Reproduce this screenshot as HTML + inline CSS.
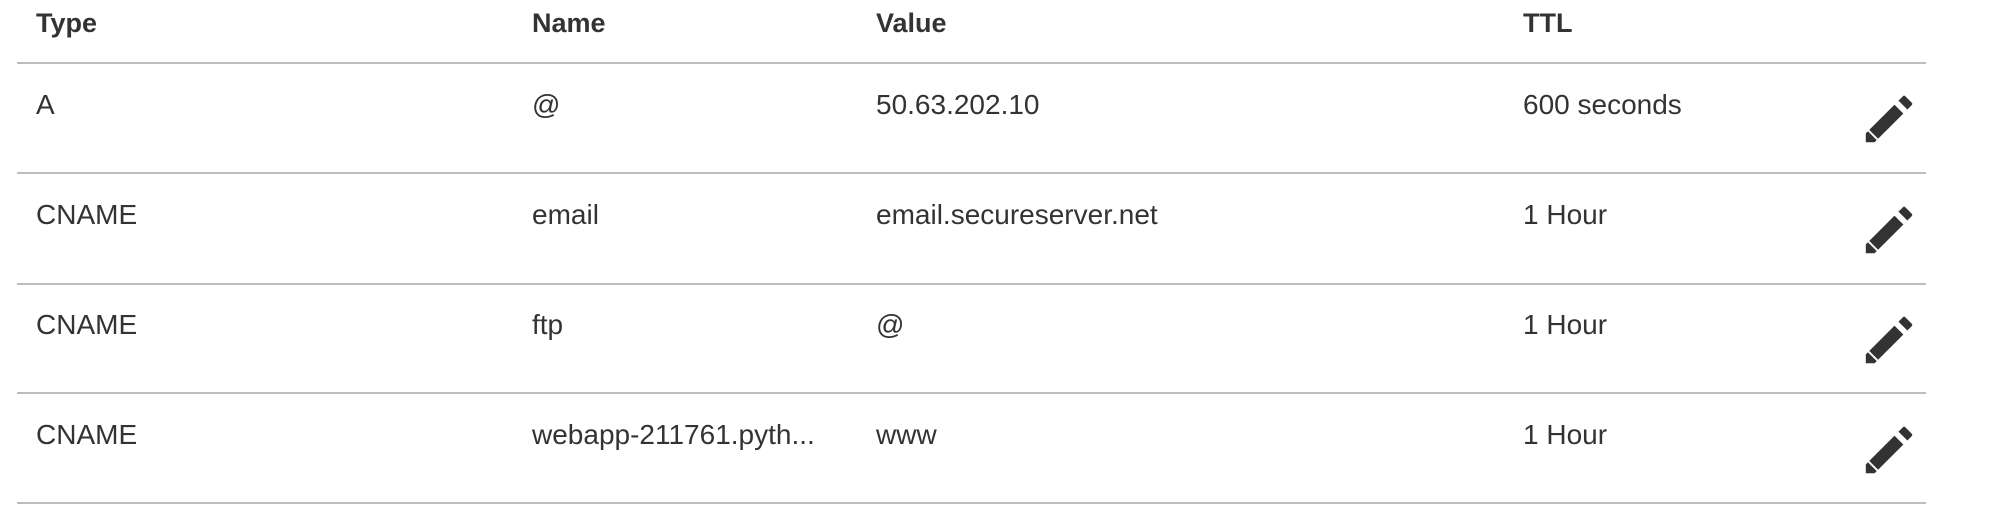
<!DOCTYPE html>
<html><head><style>
html,body{margin:0;padding:0;background:#fff;width:1998px;height:516px;overflow:hidden}
body{font-family:"Liberation Sans",Arial,sans-serif;color:#333;position:relative}
.t{position:absolute;font-size:28px;line-height:30px;white-space:nowrap}
.h{font-weight:bold;font-size:27px}
.l{position:absolute;left:17px;width:1909px;height:2px;background:#bdbdbd}
svg{position:absolute;width:64px;height:64px}
</style></head><body>
<div class="t h" style="left:36px;top:8px">Type</div>
<div class="t h" style="left:532px;top:8px">Name</div>
<div class="t h" style="left:876px;top:8px">Value</div>
<div class="t h" style="left:1523px;top:8px">TTL</div>
<div class="l" style="top:62px"></div>

<div class="t" style="left:36px;top:90px">A</div>
<div class="t" style="left:532px;top:90px">@</div>
<div class="t" style="left:876px;top:90px">50.63.202.10</div>
<div class="t" style="left:1523px;top:90px">600 seconds</div>
<svg style="left:1857px;top:87px" viewBox="0 0 24 24"><path fill="#333" stroke="#fff" stroke-width="0.6" d="M3 17.25V21h3.75L17.81 9.94l-3.75-3.75L3 17.25zM20.71 7.04a1 1 0 000-1.41l-2.34-2.34a1 1 0 00-1.41 0l-1.83 1.83 3.75 3.75 1.83-1.83z"/><path stroke="#fff" stroke-width="0.7" d="M4.2 16.2l3.6 3.6"/></svg>
<div class="l" style="top:172px"></div>

<div class="t" style="left:36px;top:200px">CNAME</div>
<div class="t" style="left:532px;top:200px">email</div>
<div class="t" style="left:876px;top:200px">email.secureserver.net</div>
<div class="t" style="left:1523px;top:200px">1 Hour</div>
<svg style="left:1857px;top:198px" viewBox="0 0 24 24"><path fill="#333" stroke="#fff" stroke-width="0.6" d="M3 17.25V21h3.75L17.81 9.94l-3.75-3.75L3 17.25zM20.71 7.04a1 1 0 000-1.41l-2.34-2.34a1 1 0 00-1.41 0l-1.83 1.83 3.75 3.75 1.83-1.83z"/><path stroke="#fff" stroke-width="0.7" d="M4.2 16.2l3.6 3.6"/></svg>
<div class="l" style="top:283px"></div>

<div class="t" style="left:36px;top:310px">CNAME</div>
<div class="t" style="left:532px;top:310px">ftp</div>
<div class="t" style="left:876px;top:310px">@</div>
<div class="t" style="left:1523px;top:310px">1 Hour</div>
<svg style="left:1857px;top:308px" viewBox="0 0 24 24"><path fill="#333" stroke="#fff" stroke-width="0.6" d="M3 17.25V21h3.75L17.81 9.94l-3.75-3.75L3 17.25zM20.71 7.04a1 1 0 000-1.41l-2.34-2.34a1 1 0 00-1.41 0l-1.83 1.83 3.75 3.75 1.83-1.83z"/><path stroke="#fff" stroke-width="0.7" d="M4.2 16.2l3.6 3.6"/></svg>
<div class="l" style="top:392px"></div>

<div class="t" style="left:36px;top:420px">CNAME</div>
<div class="t" style="left:532px;top:420px">webapp-211761.pyth...</div>
<div class="t" style="left:876px;top:420px">www</div>
<div class="t" style="left:1523px;top:420px">1 Hour</div>
<svg style="left:1857px;top:418px" viewBox="0 0 24 24"><path fill="#333" stroke="#fff" stroke-width="0.6" d="M3 17.25V21h3.75L17.81 9.94l-3.75-3.75L3 17.25zM20.71 7.04a1 1 0 000-1.41l-2.34-2.34a1 1 0 00-1.41 0l-1.83 1.83 3.75 3.75 1.83-1.83z"/><path stroke="#fff" stroke-width="0.7" d="M4.2 16.2l3.6 3.6"/></svg>
<div class="l" style="top:502px"></div>
</body></html>
